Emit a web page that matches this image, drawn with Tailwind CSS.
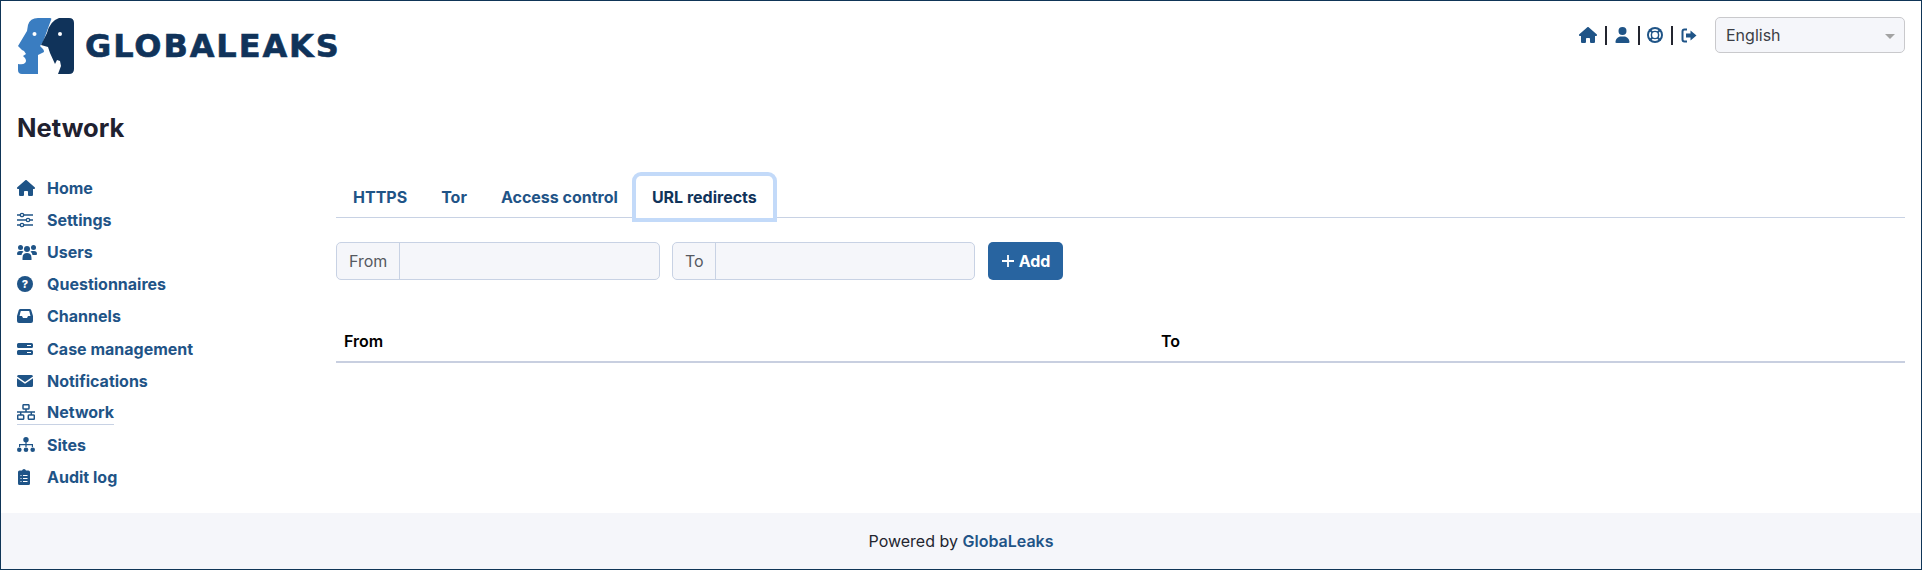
<!DOCTYPE html>
<html lang="en">

<head>
  <meta charset="UTF-8">
  <title>GlobaLeaks - Network</title>
  <script src="https://cdn.jsdelivr.net/npm/@tailwindcss/browser@4"></script>
</head>

<body class="bg-white font-['Inter',sans-serif] text-[#23252f]">
  <div class="flex flex-col h-[570px] border border-[#0f3557] overflow-hidden">

    <!-- header -->
    <header class="flex justify-between h-[102px] shrink-0">
      <div class="flex items-start pl-4 pt-4">
        <svg class="w-[58px] h-[58px]" viewBox="0 0 58 58">
          <path fill="#3a7dc1" d="M21 1H33Q35 1 34 3L26 25L23 29L26 32Q27 33 27 35L21 38V57H5Q1 57 1 53V47Q6 48 8 46Q10 44 8 41L6 39L9 37L7 34L5 33L1 29L10 14L11 8Q13 1 21 1Z"/>
          <path fill="#10335a" d="M42 1H52Q57 1 57 6V52Q57 57 52 57H41L44 49L43 44L40 43L38 47L33 36L31 30L24 28L30 16Q33 4 42 1Z"/>
          <circle cx="17.500" cy="17" r="2" fill="#fff"/>
          <circle cx="43" cy="17" r="2" fill="#fff"/>
        </svg>
        <span class="ml-[10px] mt-[7px] font-['DejaVu_Sans',sans-serif] text-[32px] leading-[44px] font-bold tracking-[1.900px] [-webkit-text-stroke:0.6px_#10335a] text-[#10335a]">GLOBALEAKS</span>
      </div>
      <div class="flex items-start pt-4 pr-4">
        <div class="flex items-center h-[36px] text-[#1f5487]">
          <svg class="w-[18px] h-[16px]" viewBox="0 0 576 512" fill="currentColor"><path d="M575.8 255.500c0 18-15 32.100-32 32.100h-32l.7 160.200c0 2.700-.2 5.400-.5 8.100V472c0 22.100-17.900 40-40 40H456c-1.100 0-2.200 0-3.300-.1c-1.400 .1-2.800 .1-4.200 .1H416 392c-22.100 0-40-17.900-40-40V448 384c0-17.700-14.300-32-32-32H256c-17.700 0-32 14.300-32 32v64 24c0 22.100-17.900 40-40 40H160 128.100c-1.500 0-3-.1-4.500-.2c-1.200 .1-2.400 .2-3.600 .2H104c-22.100 0-40-17.900-40-40V360c0-.9 0-1.900 .1-2.800V287.600H32c-18 0-32-14-32-32.100c0-9 3-17 10-24L266.400 8c7-7 15-8 22-8s15 2 21 7L564.800 231.500c8 7 12 15 11 24z"/></svg>
          <span class="w-[2px] h-[19px] bg-[#23252f] mx-[8px]"></span>
          <svg class="w-[15px] h-[16px]" viewBox="0 0 448 512" fill="currentColor"><path d="M224 256A128 128 0 1 0 224 0a128 128 0 1 0 0 256zm-45.700 48C79.800 304 0 383.800 0 482.300C0 498.700 13.300 512 29.700 512H418.300c16.400 0 29.700-13.300 29.700-29.700C448 383.800 368.200 304 269.700 304H178.300z"/></svg>
          <span class="w-[2px] h-[19px] bg-[#23252f] ml-[8px] mr-[7px]"></span>
          <svg class="w-[16px] h-[16px]" viewBox="0 0 16 16" fill="none"><circle cx="8" cy="8" r="8" fill="currentColor"/><circle cx="8" cy="8" r="5.200" stroke="#fff" stroke-width="1.700"/><path stroke="currentColor" stroke-width="2" d="M2.500 2.500l3.500 3.500M13.500 2.500l-3.500 3.500M2.500 13.500l3.500-3.500M13.500 13.500l-3.500-3.500"/><circle cx="8" cy="8" r="2.900" fill="#fff"/></svg>
          <span class="w-[2px] h-[19px] bg-[#23252f] mx-[8px]"></span>
          <svg class="w-[16px] h-[15px]" viewBox="0 0 16 15" fill="currentColor"><path fill="none" stroke="currentColor" stroke-width="2" d="M6 1.500H3.500Q1.500 1.500 1.500 3.500v8Q1.500 13.500 3.500 13.500H6"/><path d="M5 5.500H9.500V2.500L15.500 7.500 9.500 12.500V9.500H5z"/></svg>
        </div>
        <div class="relative ml-[18px] flex items-center w-[190px] h-[36px] rounded-[5px] border border-[#c9c9cc] bg-[#f5f6fa] pl-[10px] text-[16px] text-[#3b3e46]">
          English
          <span class="absolute right-[9px] top-[16px] w-0 h-0 border-x-[5px] border-x-transparent border-t-[5px] border-t-[#a3a3a3]"></span>
        </div>
      </div>
    </header>

    <div class="flex flex-1">
      <!-- sidebar -->
      <aside class="w-[335px] shrink-0 pl-4">
        <h1 class="mt-[9px] text-[25.600px] leading-[32px] font-bold text-[#1f2130]">Network</h1>
        <nav class="mt-[28px] flex flex-col items-start text-[16px] font-bold text-[#1f5487]">
          <a class="flex items-center h-[32.100px]">
            <svg class="w-[18px] h-[16px] mr-[12px]" viewBox="0 0 576 512" fill="currentColor"><path d="M575.8 255.500c0 18-15 32.100-32 32.100h-32l.7 160.200c0 2.700-.2 5.400-.5 8.100V472c0 22.100-17.900 40-40 40H456c-1.100 0-2.200 0-3.300-.1c-1.400 .1-2.800 .1-4.200 .1H416 392c-22.100 0-40-17.900-40-40V448 384c0-17.700-14.300-32-32-32H256c-17.700 0-32 14.300-32 32v64 24c0 22.100-17.900 40-40 40H160 128.100c-1.500 0-3-.1-4.500-.2c-1.200 .1-2.400 .2-3.600 .2H104c-22.100 0-40-17.900-40-40V360c0-.9 0-1.900 .1-2.800V287.600H32c-18 0-32-14-32-32.100c0-9 3-17 10-24L266.400 8c7-7 15-8 22-8s15 2 21 7L564.800 231.500c8 7 12 15 11 24z"/></svg>
            Home
          </a>
          <a class="flex items-center h-[32.100px]">
            <svg class="w-4 h-[16px] mr-[14px]" viewBox="0 0 16 16" fill="none" stroke="currentColor" stroke-width="1.300"><path d="M0 3h16M0 8h16M0 13h16"/><circle cx="5" cy="3" r="1.700" fill="#fff"/><circle cx="11" cy="8" r="1.700" fill="#fff"/><circle cx="5" cy="13" r="1.700" fill="#fff"/></svg>
            Settings
          </a>
          <a class="flex items-center h-[32.100px]">
            <svg class="w-[20px] h-[16px] mr-[10px]" viewBox="0 0 20 16" fill="currentColor"><circle cx="3.500" cy="3.500" r="2.500"/><circle cx="16.500" cy="3.500" r="2.500"/><circle cx="10" cy="5" r="3"/><path d="M0 10q0-3 3-3h2q1 0 1.500 .5Q4.500 9 4.500 11H1q-1 0-1-1zM20 10q0-3-3-3h-2q-1 0-1.500 .5q2 1.500 2 3.500H19q1 0 1-1zM5.500 14q0-5 4.500-5t4.500 5v2h-9z"/></svg>
            Users
          </a>
          <a class="flex items-center h-[32.100px]">
            <span class="flex items-center justify-center w-4 h-4 mr-[14px] rounded-full bg-[#1f5487] text-white text-[11px] leading-none font-extrabold">?</span>
            Questionnaires
          </a>
          <a class="flex items-center h-[32.100px]">
            <svg class="w-4 h-[14px] mr-[14px]" viewBox="0 0 16 14" fill="currentColor"><path fill-rule="evenodd" d="M3.500 0h9q1.200 0 1.700 1L16 7v5q0 2-2 2H2q-2 0-2-2V7L1.800 1Q2.300 0 3.500 0zM3.800 2L2.500 7H5l1 2h4l1-2h2.500L12.200 2z"/></svg>
            Channels
          </a>
          <a class="flex items-center h-[32.100px]">
            <svg class="w-4 h-[14px] mr-[14px]" viewBox="0 0 16 14" fill="currentColor"><path fill-rule="evenodd" d="M1.500 1h13q1.500 0 1.500 1.500v2q0 1.500-1.500 1.500h-13Q0 6 0 4.500v-2Q0 1 1.500 1zM10 3v1h4V3zM1.500 8h13q1.500 0 1.500 1.500v2q0 1.500-1.500 1.500h-13Q0 13 0 11.500v-2Q0 8 1.500 8zM10 10v1h4v-1z"/></svg>
            Case management
          </a>
          <a class="flex items-center h-[32.100px]">
            <svg class="w-4 h-[12px] mr-[14px]" viewBox="0 0 16 12" fill="currentColor"><path d="M1.500 0h13Q16 0 16 1.500L8 7 0 1.500Q0 0 1.500 0zM0 3.200L8 8.700l8-5.500V10.500Q16 12 14.500 12h-13Q0 12 0 10.500z"/></svg>
            Notifications
          </a>
          <div class="flex items-center h-[32.100px]">
            <a class="flex items-center h-[25px] border-b border-[#c8d2e4]">
              <svg class="w-[18px] h-[16px] mr-[12px]" viewBox="0 0 18 16" fill="none" stroke="currentColor" stroke-width="1.500"><rect x="6" y=".7" width="6" height="4.300" rx=".8"/><rect x=".7" y="11" width="6" height="4.300" rx=".8"/><rect x="11.300" y="11" width="6" height="4.300" rx=".8"/><path d="M0 8h18M9 5v3M3.700 8v3M14.300 8v3"/></svg>
              Network
            </a>
          </div>
          <a class="flex items-center h-[32.100px]">
            <svg class="w-[18px] h-[15px] mr-[12px]" viewBox="0 0 18 15" fill="currentColor"><circle cx="9" cy="2.700" r="2.700"/><circle cx="2.300" cy="12.700" r="2.300"/><circle cx="9" cy="12.700" r="2.300"/><circle cx="15.700" cy="12.700" r="2.300"/><path d="M8.400 4h1.200v3H16v3h-1.200V8.200H9.600V10H8.400V8.200H3.200V10H2V7h6.400z"/></svg>
            Sites
          </a>
          <a class="flex items-center h-[32.100px]">
            <svg class="w-3 h-4 ml-[1px] mr-[17px]" viewBox="0 0 12 16" fill="currentColor"><path fill-rule="evenodd" d="M4 1.500Q4.500 0 6 0t2 1.500h2.500Q12 1.500 12 3v11.500Q12 16 10.500 16h-9Q0 16 0 14.500V3Q0 1.500 1.500 1.500zM2.500 6v1h1V6zM5 6v1h4.500V6zM2.500 9v1h1V9zM5 9v1h4.500V9zM2.500 12v1h1v-1zM5 12v1h4.500v-1z"/></svg>
            Audit log
          </a>
        </nav>
      </aside>

      <!-- main -->
      <main class="flex-1 pr-4 pt-[69px]">
        <ul class="flex h-[46px] border-b border-[#c8d2e4] text-[16px] font-bold text-[#1f5487]">
          <li class="flex items-center h-[42px] mt-[4px] px-[17px]">HTTPS</li>
          <li class="flex items-center h-[42px] mt-[4px] px-[17px]">Tor</li>
          <li class="flex items-center h-[42px] mt-[4px] px-[17px]">Access control</li>
          <li class="flex items-center h-[42px] mt-[4px] ml-[1px] px-4 bg-white rounded-t-[5px] text-[#10335a] shadow-[0_0_0_4px_#c3daf9] relative">URL redirects</li>
        </ul>

        <form class="flex mt-[24px] text-[16px]">
          <div class="flex w-[324px] h-[38px] rounded-[5px] border border-[#c8d2e4] bg-[#f5f6fa]">
            <span class="flex items-center px-3 border-r border-[#c8d2e4] text-[#555961] w-[63px]">From</span>
            <input class="flex-1 min-w-0 bg-transparent" type="text">
          </div>
          <div class="flex w-[303px] h-[38px] ml-[12px] rounded-[5px] border border-[#c8d2e4] bg-[#f5f6fa]">
            <span class="flex items-center px-3 border-r border-[#c8d2e4] text-[#555961] w-[43px]">To</span>
            <input class="flex-1 min-w-0 bg-transparent" type="text">
          </div>
          <button type="button" class="flex items-center justify-center w-[75px] h-[38px] ml-[13px] rounded-[5px] bg-[#2864a0] text-white font-bold">
            <svg class="w-[14px] h-[14px] mr-[4px]" viewBox="0 0 14 14" stroke="currentColor" stroke-width="1.800"><path d="M7 1v12M1 7h12"/></svg>
            Add
          </button>
        </form>

        <div class="grid grid-cols-[817px_1fr] mt-[40px] h-[43px] items-center border-b-2 border-[#c8cfe0] text-[16px] font-semibold text-black">
          <span class="px-2">From</span>
          <span class="px-2">To</span>
        </div>
      </main>
    </div>

    <footer class="flex items-center justify-center h-[56px] shrink-0 bg-[#f5f6fa] text-[16px]">
      Powered by&nbsp;<a class="font-semibold text-[#1f5487]">GlobaLeaks</a>
    </footer>
  </div>
</body>

</html>
